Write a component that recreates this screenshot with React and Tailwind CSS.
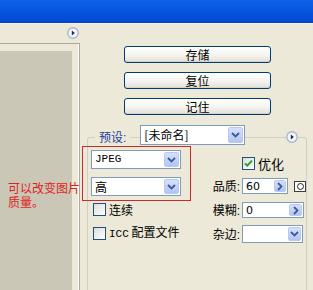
import React from "react";

const Chevron = ({ dir = "down" }) =>
  dir === "down" ? (
    <svg width="9" height="6" viewBox="0 0 9 6">
      <path d="M1 1l3.5 3.5L8 1" fill="none" stroke="#3E5A98" strokeWidth="1.8" />
    </svg>
  ) : (
    <svg width="6" height="9" viewBox="0 0 6 9">
      <path d="M1 1l3.5 3.5L1 8" fill="none" stroke="#3E5A98" strokeWidth="1.8" />
    </svg>
  );

const ArrowBtn = ({ dir, className = "" }) => (
  <div
    className={`flex shrink-0 items-center justify-center rounded-[2px] border border-[#B8C9EF] bg-gradient-to-b from-[#D6E1FB] to-[#B2C5F2] ${className}`}
  >
    <Chevron dir={dir} />
  </div>
);

const RoundBtn = () => (
  <svg width="12" height="12" viewBox="0 0 12 12" className="shrink-0">
    <circle cx="6" cy="6" r="5.2" fill="#F6F6F4" stroke="#A9B6D2" strokeWidth="1.4" />
    <path d="M4.8 3.6v4.8L7.9 6z" fill="#1B2A5C" />
  </svg>
);

const Checkbox = ({ checked }) => (
  <div className="flex h-[13px] w-[13px] shrink-0 items-center justify-center border border-[#1C5180] bg-gradient-to-br from-[#DCDCD7] to-white">
    {checked && (
      <svg width="9" height="9" viewBox="0 0 9 9">
        <path d="M1 4.3l2.3 2.4L8 1.6" fill="none" stroke="#21A121" strokeWidth="1.9" />
      </svg>
    )}
  </div>
);

const Button = ({ children }) => (
  <div className="flex h-[17px] items-center justify-center rounded-[3px] border border-[#003C74] bg-gradient-to-b from-white via-[#F6F5F1] to-[#E2E0D6] text-[12px] leading-none text-black shadow-[inset_0_-1px_0_#D6D0C5]">
    {children}
  </div>
);

export default function App() {
  return (
    <div className="relative flex h-[290px] w-[313px] flex-col overflow-hidden bg-[#ECE9D8] font-['Noto_Sans_CJK_SC',sans-serif] text-black">
      <div className="h-[24px] shrink-0 border-b border-[#F4F2EA] bg-gradient-to-b from-[#0D62EA] to-[#0047CF]" />

      <div className="flex flex-1">
        <div className="flex w-[80px] shrink-0 flex-col">
          <div className="flex justify-end pr-[1px] pt-[3px]">
            <RoundBtn />
          </div>
          <div className="mt-[4px] flex-1 border-r border-t border-[#ACA899] pt-[7px] shadow-[inset_-1px_0_0_#FFFFFF]">
            <div className="h-full w-[72px] bg-[#CBC7B7]" />
          </div>
        </div>

        <div className="flex flex-1 flex-col pt-[22px]">
          <div className="ml-[44px] flex w-[147px] flex-col gap-[9px]">
            <Button>存储</Button>
            <Button>复位</Button>
            <Button>记住</Button>
          </div>

          <div className="ml-[7px] mt-[22px] w-[220px] flex-1 rounded-t-[3px] border-x border-t border-[#D0D0BF]">
            <div className="-mt-[13px] flex h-[20px] items-start">
              <div className="ml-[7px] mt-[5px] bg-[#ECE9D8] px-[4px] text-[12px] leading-[14px] text-[#1F3F99]">
                预设<span className="font-['Liberation_Sans',sans-serif]">:</span>
              </div>
              <div className="ml-[10px] flex h-[20px] w-[105px] items-center border border-[#7F9DB9] bg-white p-px">
                <span className="flex-1 pl-[2px] text-[12px] leading-none">[未命名]</span>
                <ArrowBtn dir="down" className="h-full w-[15px]" />
              </div>
              <div className="flex-1" />
              <div className="mr-[8px] mt-[6px] bg-[#ECE9D8]">
                <RoundBtn />
              </div>
            </div>

            <div className="flex">
              <div className="flex w-[120px] flex-col pl-[3px]">
                <div className="mt-[5px] flex h-[19px] w-[90px] items-center border border-[#7F9DB9] bg-white p-px">
                  <span className="flex-1 pl-[2px] font-['Liberation_Mono',monospace] text-[11px] leading-none">JPEG</span>
                  <ArrowBtn dir="down" className="h-full w-[15px]" />
                </div>
                <div className="mt-[8px] flex h-[19px] w-[90px] items-center border border-[#7F9DB9] bg-white p-px">
                  <span className="flex-1 pl-[2px] text-[12px] leading-none">高</span>
                  <ArrowBtn dir="down" className="h-full w-[15px]" />
                </div>
                <div className="ml-[2px] mt-[7px] flex items-center gap-[3px]">
                  <Checkbox />
                  <span className="text-[12px] leading-[13px]">连续</span>
                </div>
                <div className="ml-[2px] mt-[9px] flex items-center gap-[3px]">
                  <Checkbox />
                  <span className="text-[12px] leading-[13px]">
                    <span className="font-['Liberation_Mono',monospace] text-[11px]">ICC</span> 配置文件
                  </span>
                </div>
              </div>

              <div className="flex flex-1 flex-col">
                <div className="mt-[12px] flex items-center gap-[3px] pl-[34px]">
                  <Checkbox checked />
                  <span className="text-[13px] leading-[13px]">优化</span>
                </div>
                <div className="mt-[8px] flex items-center">
                  <div className="w-[34px] pr-[2px] text-right text-[12px] leading-none">
                    品质<span className="font-['Liberation_Sans',sans-serif]">:</span>
                  </div>
                  <div className="flex h-[16px] w-[46px] items-center border border-[#7F9DB9] bg-white p-px">
                    <span className="flex-1 pl-[2px] font-['DejaVu_Sans',sans-serif] text-[11px] leading-none">60</span>
                    <ArrowBtn dir="right" className="h-full w-[12px]" />
                  </div>
                  <div className="ml-[6px] flex h-[11px] w-[12px] items-center justify-center border border-[#3A3A3A] bg-white">
                    <div className="h-[7px] w-[7px] rounded-full border border-[#222]" />
                  </div>
                </div>
                <div className="mt-[8px] flex items-center">
                  <div className="w-[34px] pr-[2px] text-right text-[12px] leading-none">
                    模糊<span className="font-['Liberation_Sans',sans-serif]">:</span>
                  </div>
                  <div className="flex h-[16px] w-[62px] items-center border border-[#7F9DB9] bg-white p-px">
                    <span className="flex-1 pl-[2px] font-['DejaVu_Sans',sans-serif] text-[11px] leading-none">0</span>
                    <ArrowBtn dir="right" className="h-full w-[13px]" />
                  </div>
                </div>
                <div className="mt-[7px] flex items-center">
                  <div className="w-[34px] pr-[2px] text-right text-[12px] leading-none">
                    杂边<span className="font-['Liberation_Sans',sans-serif]">:</span>
                  </div>
                  <div className="flex h-[18px] w-[61px] items-center border border-[#7F9DB9] bg-white p-px">
                    <span className="flex-1" />
                    <ArrowBtn dir="down" className="h-full w-[13px]" />
                  </div>
                </div>
              </div>
            </div>
          </div>
        </div>
      </div>

      {/* red annotation */}
      <div className="absolute left-[82px] top-[146px] h-[55px] w-[109px] border border-[#CC2B2B]" />
      <div className="absolute left-[8px] top-[181px] flex flex-col text-[12px] leading-[14px] text-[#E01E1E]">
        <span>可以改变图片</span>
        <span>质量。</span>
      </div>
    </div>
  );
}
